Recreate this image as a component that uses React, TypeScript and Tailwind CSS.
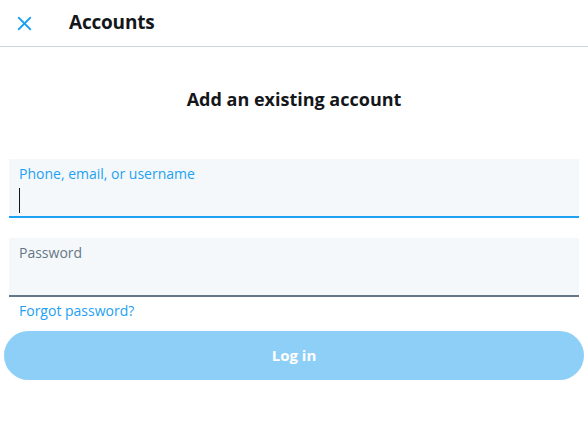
import { X } from "lucide-react";

export default function App() {
  return (
    <div
      className="w-[588px] h-[429px] bg-white text-[#14171a]"
      style={{ fontFamily: '"Open Sans", "Noto Sans", sans-serif' }}
    >
      {/* Header */}
      <div className="h-[47px] flex items-center border-b border-[#ccd6dd]">
        <div className="w-[48px] pl-[13px] flex items-center">
          <X size={23} strokeWidth={1.9} className="text-[#1da1f2]" />
        </div>
        <h1 className="ml-[21px] -mt-[2px] text-[19px] font-bold leading-none tracking-[-0.2px]">Accounts</h1>
      </div>

      <h2 className="mt-[40px] text-center text-[18px] font-bold leading-[24px]">
        Add an existing account
      </h2>

      <div className="mt-[48px] px-[9px] flex flex-col">
        {/* Phone input */}
        <div className="h-[59px] bg-[#f5f8fa] border-b-2 border-[#1da1f2] px-[10px] pt-[6px]">
          <div className="text-[14px] leading-[18px] text-[#1da1f2]">Phone, email, or username</div>
          <div className="mt-[5px] w-[1px] h-[25px] bg-[#14171a]" />
        </div>

        {/* Password input */}
        <div className="mt-[20px] h-[59px] bg-[#f5f8fa] border-b-2 border-[#657786] px-[10px] pt-[6px]">
          <div className="text-[14px] leading-[18px] text-[#657786]">Password</div>
        </div>

        <a className="mt-[5px] ml-[10px] text-[14px] leading-[18px] text-[#1da1f2]">Forgot password?</a>
      </div>

      <div className="mt-[11px] px-[4px]">
        <button className="w-full h-[49px] rounded-full bg-[#8ecff8] text-white font-bold text-[15px]">
          Log in
        </button>
      </div>
    </div>
  );
}
